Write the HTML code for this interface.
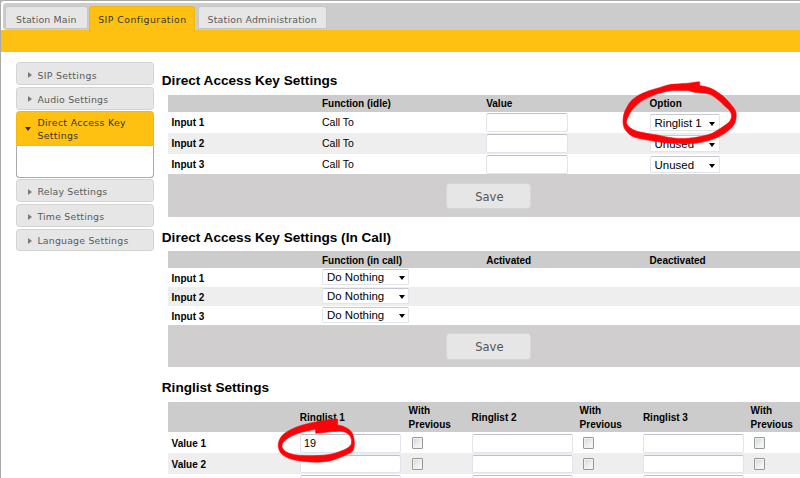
<!DOCTYPE html>
<html lang="en">
<head>
<meta charset="utf-8">
<title>SIP Configuration - Direct Access Key Settings</title>
<style>
html,body{margin:0;padding:0;background:#b4b4b4;}
body{width:800px;height:478px;overflow:hidden;position:relative;font-family:"Liberation Sans",Arial,sans-serif;color:#000;}
.abs{position:absolute;}
#frame{left:0;top:0;width:820px;height:500px;border:1px solid #aaa;border-radius:3.4px;box-sizing:border-box;background:#fff;}
#tabbar{left:2.8px;top:3px;width:820px;height:26.6px;background:#ccc;border-radius:3.4px;}
#yellow{left:1px;top:29.8px;width:820px;height:22.1px;background:#fec111;}
.tab{position:absolute;top:6.2px;height:23.1px;box-sizing:border-box;border:1px solid #c6c6c6;background:#e6e6e6;border-radius:3.4px 3.4px 0 0;
 font-family:"DejaVu Sans",Verdana,sans-serif;font-size:9.4px;letter-spacing:0.2px;color:#5a5a5a;text-align:center;line-height:25px;white-space:nowrap;}
.tab.on{background:#fec111;border-color:#f2b60c;border-bottom:none;height:25.4px;color:#363636;}
/* accordion */
.acc{position:absolute;left:15.7px;width:137.9px;height:22.8px;box-sizing:border-box;border:1px solid #d3d3d3;background:#e6e6e6;border-radius:3.4px;
 font-family:"DejaVu Sans",Verdana,sans-serif;font-size:9.4px;letter-spacing:0.2px;color:#5a5a5a;line-height:25.2px;padding-left:20.7px;white-space:nowrap;}
.acc i{position:absolute;left:10.9px;top:8.4px;width:0;height:0;border-left:4.2px solid #7a7a7a;border-top:3.7px solid transparent;border-bottom:3.7px solid transparent;}
.acc.on{background:#fec111;border-color:#f2b60c;color:#363636;height:34.6px;border-radius:3.4px 3.4px 0 0;line-height:12.8px;padding-top:4.6px;white-space:normal;}
.acc.on i{left:8.6px;top:14.6px;border-top:4.2px solid #2e2e3a;border-left:3.7px solid transparent;border-right:3.7px solid transparent;border-bottom:none;}
#accpanel{left:15.7px;top:145.6px;width:137.9px;height:32px;box-sizing:border-box;border:1px solid #aaa;border-top:none;border-radius:0 0 3.4px 3.4px;background:#fff;}
/* content */
h2{position:absolute;left:161.8px;margin:0;font-size:13.6px;font-weight:bold;line-height:16px;white-space:nowrap;}
.hdr{position:absolute;left:168px;width:660px;background:#ccc;}
.row{position:absolute;left:168px;width:660px;}
.row.alt{background:#eee;}
.foot{position:absolute;left:168px;width:660px;background:#d0cece;}
.t{position:absolute;font-size:10px;white-space:nowrap;line-height:12px;}
.b{font-weight:bold;}
.r{font-size:10.5px;margin-top:-0.8px;}
.inp{position:absolute;box-sizing:border-box;background:#fff;border:1px solid #e0e3eb;border-top-color:#bcc0ca;border-radius:2.5px;font-size:11.2px;line-height:16px;padding-left:3px;}
.sel{position:absolute;box-sizing:border-box;background:#fff;border:1px solid #e1e4eb;border-top-color:#c6c9d2;border-radius:1.5px;font-size:11.45px;line-height:14.4px;padding-left:3.6px;white-space:nowrap;}
.sel i{position:absolute;right:3.2px;top:5.9px;width:0;height:0;border-top:4.2px solid #000;border-left:3.8px solid transparent;border-right:3.8px solid transparent;}
.sel.s1{line-height:16.8px;}
.sel.s1 i{top:7.2px;}
.cb{position:absolute;box-sizing:border-box;width:11.3px;height:11.6px;border:1px solid #979898;border-radius:1px;background:linear-gradient(135deg,#cfd3d6 0%,#e9ecee 50%,#fdfdfd 100%);box-shadow:inset 0 0 0 1px #f1f1f1;}
.btn{position:absolute;left:446.2px;width:85.2px;height:26px;padding-left:1.2px;box-sizing:border-box;border:1px solid #d6d6d6;border-radius:3.4px;background:#e6e6e6;
 font-family:"DejaVu Sans",Verdana,sans-serif;font-size:11.5px;color:#555;text-align:center;line-height:27.6px;}
svg{position:absolute;left:0;top:0;}
</style>
</head>
<body>
<div id="frame" class="abs"></div>
<div id="tabbar" class="abs"></div>
<div id="yellow" class="abs"></div>
<div class="tab" style="left:4.8px;width:83px;letter-spacing:0.15px;">Station Main</div>
<div class="tab on" style="left:89.2px;width:106.3px;letter-spacing:0.44px;">SIP Configuration</div>
<div class="tab" style="left:197.5px;width:129.5px;">Station Administration</div>

<div class="acc" style="top:62.3px;letter-spacing:0.31px;"><i></i>SIP Settings</div>
<div class="acc" style="top:86.9px;line-height:23.2px;"><i></i>Audio Settings</div>
<div class="acc on" style="top:111.2px;letter-spacing:0.32px;"><i></i>Direct Access Key<br>Settings</div>
<div id="accpanel" class="abs"></div>
<div class="acc" style="top:179.2px;height:23px;line-height:23.4px;"><i></i>Relay Settings</div>
<div class="acc" style="top:204.3px;line-height:23.2px;"><i></i>Time Settings</div>
<div class="acc" style="top:228.7px;line-height:21.2px;"><i></i>Language Settings</div>

<!-- Section 1 -->
<h2 style="top:72.6px;">Direct Access Key Settings</h2>
<div class="hdr" style="top:95px;height:17px;"></div>
<div class="row" style="top:112px;height:20.8px;"></div>
<div class="row alt" style="top:132.8px;height:20.9px;"></div>
<div class="row" style="top:153.7px;height:20.6px;"></div>
<div class="foot" style="top:174.3px;height:42.4px;"></div>
<div class="t b" style="left:322px;top:97.8px;">Function (idle)</div>
<div class="t b" style="left:486.2px;top:97.8px;">Value</div>
<div class="t b" style="left:649.6px;top:97.8px;">Option</div>
<div class="t b" style="left:171.6px;top:117px;">Input 1</div>
<div class="t b" style="left:171.6px;top:137.8px;">Input 2</div>
<div class="t b" style="left:171.6px;top:159px;">Input 3</div>
<div class="t r" style="left:322px;top:116.4px;">Call To</div>
<div class="t r" style="left:322px;top:137.3px;">Call To</div>
<div class="t r" style="left:322px;top:158.9px;">Call To</div>
<div class="inp" style="left:486.2px;top:113.1px;width:81.7px;height:18.7px;"></div>
<div class="inp" style="left:486.2px;top:134px;width:81.7px;height:18.7px;"></div>
<div class="inp" style="left:486.2px;top:154.8px;width:81.7px;height:18.9px;"></div>
<div class="sel s1" style="left:650px;top:114.2px;width:69.5px;height:17.2px;">Ringlist 1<i></i></div>
<div class="sel s1" style="left:650px;top:134.9px;width:69.5px;height:17.2px;">Unused<i></i></div>
<div class="sel s1" style="left:650px;top:155.5px;width:69.5px;height:17.2px;">Unused<i></i></div>
<div class="btn" style="top:182.6px;">Save</div>

<!-- Section 2 -->
<h2 style="top:229.6px;">Direct Access Key Settings (In Call)</h2>
<div class="hdr" style="top:250.9px;height:17.3px;"></div>
<div class="row" style="top:268.2px;height:18.8px;"></div>
<div class="row alt" style="top:287px;height:18.8px;"></div>
<div class="row" style="top:305.8px;height:18.8px;"></div>
<div class="foot" style="top:324.6px;height:42.6px;"></div>
<div class="t b" style="left:322px;top:254.6px;">Function (in call)</div>
<div class="t b" style="left:486.2px;top:254.6px;">Activated</div>
<div class="t b" style="left:649.6px;top:254.6px;">Deactivated</div>
<div class="t b" style="left:171.6px;top:272.8px;">Input 1</div>
<div class="t b" style="left:171.6px;top:292.2px;">Input 2</div>
<div class="t b" style="left:171.6px;top:310.5px;">Input 3</div>
<div class="sel" style="left:322.4px;top:269px;width:86.4px;height:16.4px;">Do Nothing<i></i></div>
<div class="sel" style="left:322.4px;top:288px;width:86.4px;height:16.4px;">Do Nothing<i></i></div>
<div class="sel" style="left:322.4px;top:307px;width:86.4px;height:16.4px;">Do Nothing<i></i></div>
<div class="btn" style="top:333.4px;height:26.4px;">Save</div>

<!-- Section 3 -->
<h2 style="top:379.5px;">Ringlist Settings</h2>
<div class="hdr" style="top:402.2px;height:30.2px;"></div>
<div class="row" style="top:432.4px;height:20.9px;"></div>
<div class="row alt" style="top:453.3px;height:20.9px;"></div>
<div class="row" style="top:474.2px;height:20.9px;"></div>
<div class="t b" style="left:299.8px;top:411.6px;">Ringlist 1</div>
<div class="t b" style="left:471.6px;top:411.6px;">Ringlist 2</div>
<div class="t b" style="left:642.9px;top:411.6px;">Ringlist 3</div>
<div class="t b" style="left:408.6px;top:403.7px;line-height:14px;">With<br>Previous</div>
<div class="t b" style="left:579.6px;top:403.7px;line-height:14px;">With<br>Previous</div>
<div class="t b" style="left:750.6px;top:403.7px;line-height:14px;">With<br>Previous</div>
<div class="t b" style="left:171.6px;top:437.6px;">Value 1</div>
<div class="t b" style="left:171.6px;top:458.5px;">Value 2</div>
<div class="inp" style="left:300px;top:434px;width:101.3px;height:18.6px;font-size:10.8px;line-height:16.2px;">19</div>
<div class="inp" style="left:300px;top:454.7px;width:101.3px;height:18.8px;"></div>
<div class="inp" style="left:300px;top:475.4px;width:101.3px;height:18.8px;"></div>
<div class="inp" style="left:471.9px;top:434px;width:101.3px;height:18.6px;"></div>
<div class="inp" style="left:471.9px;top:454.7px;width:101.3px;height:18.8px;"></div>
<div class="inp" style="left:471.9px;top:475.4px;width:101.3px;height:18.8px;"></div>
<div class="inp" style="left:643px;top:434px;width:101.3px;height:18.6px;"></div>
<div class="inp" style="left:643px;top:454.7px;width:101.3px;height:18.8px;"></div>
<div class="inp" style="left:643px;top:475.4px;width:101.3px;height:18.8px;"></div>
<div class="cb" style="left:412.1px;top:437.3px;"></div>
<div class="cb" style="left:412.1px;top:458.1px;"></div>
<div class="cb" style="left:583.2px;top:437.3px;"></div>
<div class="cb" style="left:583.2px;top:458.1px;"></div>
<div class="cb" style="left:754px;top:437.3px;"></div>
<div class="cb" style="left:754px;top:458.1px;"></div>

<svg width="800" height="478" viewBox="0 0 800 478">
<path fill="#fb0309" fill-rule="evenodd" stroke="#fb0309" stroke-width="0.6" stroke-linejoin="round" d="M699.6 81.8 C699.0 81.8 697.7 81.9 696.1 82.1 C694.5 82.3 692.8 82.7 690.1 83.0 C687.4 83.3 683.5 83.5 680.0 83.8 C676.5 84.1 672.6 84.1 669.0 84.8 C665.4 85.5 661.7 87.0 658.2 88.0 C654.7 89.0 651.5 89.8 648.1 91.1 C644.8 92.4 640.9 93.9 638.1 95.6 C635.3 97.3 633.0 99.2 631.1 101.1 C629.2 103.0 628.1 105.1 627.0 107.1 C625.9 109.1 624.9 111.0 624.2 113.0 C623.6 115.0 623.2 117.0 623.1 119.0 C623.0 121.0 622.9 123.2 623.3 125.1 C623.7 126.9 624.5 128.6 625.5 130.1 C626.5 131.6 627.6 132.9 629.0 134.1 C630.4 135.3 632.2 136.3 634.1 137.1 C636.0 137.8 637.8 138.1 640.1 138.6 C642.4 139.1 645.4 139.6 648.1 140.1 C650.8 140.6 653.7 141.2 656.2 141.6 C658.7 142.0 660.4 142.3 663.2 142.6 C666.0 142.9 669.9 143.4 673.2 143.6 C676.6 143.8 680.5 143.9 683.3 143.9 C686.1 143.9 687.3 143.8 690.1 143.6 C692.9 143.4 696.8 143.2 700.1 142.6 C703.5 142.0 707.2 141.0 710.2 140.1 C713.2 139.2 715.7 138.3 718.2 137.1 C720.7 135.9 723.0 134.6 725.2 133.1 C727.4 131.6 729.6 129.8 731.2 128.1 C732.8 126.4 734.0 124.8 734.8 123.1 C735.6 121.4 735.9 119.7 736.1 118.0 C736.3 116.3 736.4 114.5 736.1 113.0 C735.8 111.5 735.5 110.8 734.5 109.2 C733.5 107.6 731.8 105.4 730.2 103.6 C728.7 101.8 726.9 99.7 725.2 98.1 C723.5 96.5 721.9 95.3 720.2 94.1 C718.5 92.8 716.9 91.6 715.2 90.6 C713.5 89.6 711.9 88.7 710.2 88.0 C708.5 87.3 706.8 86.9 705.1 86.5 C703.4 86.1 700.7 85.7 699.8 85.5 Z M688.1 90.6 C686.8 90.6 683.2 90.5 680.0 90.6 C676.8 90.6 672.6 90.4 669.0 90.9 C665.4 91.4 661.7 92.5 658.2 93.6 C654.7 94.7 650.6 96.5 648.1 97.6 C645.6 98.7 644.8 99.1 643.1 100.1 C641.4 101.1 639.8 102.2 638.1 103.6 C636.4 105.0 634.5 107.0 633.1 108.6 C631.8 110.2 630.9 111.6 630.0 113.1 C629.1 114.6 628.4 116.1 627.8 117.5 C627.2 118.9 626.6 120.2 626.6 121.5 C626.6 122.8 626.6 123.8 627.5 125.1 C628.4 126.4 630.3 128.0 632.1 129.1 C633.9 130.2 635.4 130.8 638.1 131.6 C640.8 132.3 644.8 133.0 648.1 133.6 C651.5 134.2 655.7 134.8 658.2 135.2 C660.7 135.6 660.7 135.8 663.2 136.3 C665.7 136.8 669.9 137.6 673.2 138.0 C676.6 138.4 680.5 138.5 683.3 138.5 C686.1 138.5 687.3 138.4 690.1 138.1 C692.9 137.8 696.8 137.3 700.1 136.6 C703.5 135.9 707.7 134.9 710.2 134.1 C712.7 133.3 713.5 132.5 715.2 131.6 C716.9 130.7 718.5 129.7 720.2 128.6 C721.9 127.5 723.7 126.3 725.2 125.1 C726.8 123.9 728.5 122.8 729.5 121.5 C730.5 120.2 731.1 118.9 731.4 117.5 C731.6 116.1 731.5 114.3 731.0 113.0 C730.5 111.7 729.6 110.6 728.6 109.5 C727.6 108.4 726.6 107.9 725.2 106.6 C723.8 105.3 721.9 103.1 720.2 101.6 C718.5 100.1 716.9 98.8 715.2 97.6 C713.5 96.4 712.2 95.3 710.2 94.6 C708.2 93.8 705.6 93.5 703.1 93.1 C700.6 92.7 696.4 92.5 695.1 92.4 Z"/>
<path fill="#fb0309" fill-rule="evenodd" stroke="#fb0309" stroke-width="0.6" stroke-linejoin="round" d="M337.6 419.1 C336.3 419.2 332.4 419.5 329.5 419.8 C326.7 420.2 323.4 420.7 320.3 421.2 C317.3 421.7 314.2 422.3 311.1 422.9 C308.1 423.6 305.0 424.3 301.9 425.2 C298.9 426.2 295.6 427.3 292.7 428.7 C289.8 430.0 286.8 431.7 284.7 433.3 C282.5 434.9 281.1 436.6 280.1 438.5 C279.0 440.3 278.5 442.3 278.3 444.2 C278.2 446.1 278.5 448.2 279.1 450.0 C279.8 451.7 280.9 453.2 282.4 454.6 C283.9 455.9 285.8 457.1 288.1 458.0 C290.4 459.0 293.1 459.7 296.2 460.3 C299.2 460.9 302.9 461.4 306.5 461.7 C310.2 462.0 314.2 462.3 318.0 462.2 C321.9 462.0 326.1 461.6 329.5 460.9 C333.0 460.2 335.9 459.1 338.7 458.0 C341.6 457.0 344.5 455.7 346.8 454.6 C349.1 453.4 351.3 452.7 352.6 451.1 C353.8 449.6 354.0 447.5 354.3 445.4 C354.5 443.3 354.3 440.6 353.9 438.5 C353.5 436.4 353.0 434.3 352.0 432.7 C351.0 431.1 349.6 429.8 347.9 428.7 C346.3 427.6 343.9 426.7 342.2 426.0 C340.5 425.4 338.4 425.1 337.6 424.9 Z M315.5 429.3 C314.0 429.5 309.4 430.3 306.5 431.0 C303.7 431.7 301.2 432.3 298.5 433.3 C295.8 434.2 292.7 435.5 290.4 436.7 C288.1 438.0 286.0 439.4 284.7 440.8 C283.3 442.1 282.4 443.5 282.1 444.8 C281.8 446.1 282.1 447.6 282.9 448.8 C283.7 450.1 285.3 451.4 287.0 452.3 C288.6 453.2 290.4 453.8 292.7 454.3 C295.0 454.9 297.5 455.2 300.8 455.4 C304.0 455.6 308.4 455.8 312.3 455.7 C316.1 455.7 320.1 455.5 323.8 455.2 C327.4 454.8 331.1 454.2 334.1 453.4 C337.2 452.7 339.9 451.5 342.2 450.6 C344.5 449.6 346.5 448.7 347.9 447.7 C349.4 446.6 350.6 445.6 351.2 444.2 C351.7 442.9 351.7 441.1 351.4 439.6 C351.2 438.2 350.5 436.7 349.7 435.6 C348.8 434.4 347.7 433.4 346.2 432.7 C344.8 432.0 343.4 431.5 341.0 431.3 C338.6 431.1 334.7 431.4 331.8 431.6 C329.0 431.8 326.5 432.2 323.8 432.5 C321.1 432.8 317.1 433.2 315.7 433.3 Z"/>
</svg>
</body>
</html>
